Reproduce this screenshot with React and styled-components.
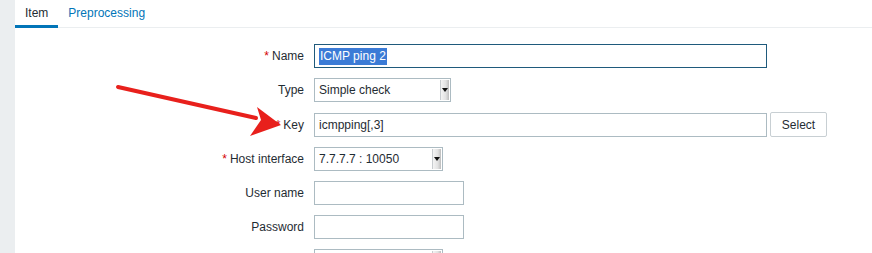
import React from 'react';
import styled, { createGlobalStyle } from 'styled-components';

const GlobalStyle = createGlobalStyle`
  html, body {
    margin: 0;
    padding: 0;
    background: #ffffff;
  }
  body {
    font-family: "Liberation Sans", Arial, sans-serif;
    font-size: 12px;
    color: #1f2c33;
  }
`;

const Page = styled.div`
  position: relative;
  display: flex;
  width: 872px;
  height: 253px;
  overflow: hidden;
`;

const Sidebar = styled.div`
  width: 15px;
  flex-shrink: 0;
  background: #ebeef0;
`;

const Main = styled.div`
  flex: 1;
  display: flex;
  flex-direction: column;
`;

const TabBar = styled.div`
  display: flex;
  height: 28px;
  border-bottom: 1px solid #ebeef0;
  box-sizing: border-box;
`;

const Tab = styled.div`
  padding: 0 10px;
  line-height: 26px;
  height: 28px;
  box-sizing: border-box;
  font-size: 12px;
  color: ${p => (p.active ? '#1f2c33' : '#0275b8')};
  border-bottom: 3px solid ${p => (p.active ? '#0275b8' : 'transparent')};
  margin-bottom: -1px;
`;

const Form = styled.div`
  display: grid;
  grid-template-columns: 289px auto;
  column-gap: 10px;
  row-gap: 10px;
  padding-top: 16px;
  align-items: center;
`;

const Label = styled.div`
  text-align: right;
  white-space: nowrap;
`;

const Asterisk = styled.span`
  color: #d40000;
  margin-right: 3px;
`;

const Field = styled.div`
  display: flex;
  align-items: center;
  gap: 3px;
`;

const TextBox = styled.div`
  width: ${p => p.width}px;
  height: 24px;
  box-sizing: border-box;
  border: 1px solid ${p => (p.focused ? '#1f5a7c' : '#acbbc2')};
  background: #ffffff;
  padding: 0 4px;
  display: flex;
  align-items: center;
`;

const Selected = styled.span`
  background: #3b7bd6;
  color: #ffffff;
  line-height: 17px;
  padding: 0 1px;
`;

const SelectBox = styled.div`
  width: ${p => p.width}px;
  height: 24px;
  box-sizing: border-box;
  border: 1px solid #acbbc2;
  background: #ffffff;
  padding-left: 4px;
  display: flex;
  align-items: center;
  justify-content: space-between;
`;

const DropButton = styled.div`
  width: 9px;
  height: 20px;
  margin-right: 1px;
  box-sizing: border-box;
  border-left: 1px solid #c8cccf;
  background: linear-gradient(90deg, #f4f4f4 0%, #e2e2e2 60%, #bdbdbd 100%);
  display: flex;
  align-items: center;
  justify-content: center;
  &::after {
    content: '';
    border-left: 3px solid transparent;
    border-right: 3px solid transparent;
    border-top: 4px solid #111111;
  }
`;

const Button = styled.div`
  width: 57px;
  height: 25px;
  box-sizing: border-box;
  border: 1px solid #c8cfd3;
  border-radius: 2px;
  background: #ffffff;
  display: flex;
  align-items: center;
  justify-content: center;
  color: #1f2c33;
`;

const Arrow = styled.svg`
  position: absolute;
  left: 0;
  top: 0;
  pointer-events: none;
`;

const rows = [
  { label: 'Name', required: true },
  { label: 'Type' },
  { label: 'Key', required: true },
  { label: 'Host interface', required: true },
  { label: 'User name' },
  { label: 'Password' },
  { label: '' },
];

const renderField = index => {
  switch (index) {
    case 0:
      return (
        <TextBox width={453} focused>
          <Selected>ICMP ping 2</Selected>
        </TextBox>
      );
    case 1:
      return (
        <SelectBox width={137}>
          Simple check
          <DropButton />
        </SelectBox>
      );
    case 2:
      return (
        <Field>
          <TextBox width={453}>icmpping[,3]</TextBox>
          <Button>Select</Button>
        </Field>
      );
    case 3:
      return (
        <SelectBox width={129}>
          7.7.7.7 : 10050
          <DropButton />
        </SelectBox>
      );
    case 4:
    case 5:
      return <TextBox width={150} />;
    default:
      return (
        <SelectBox width={129}>
          <span />
          <DropButton />
        </SelectBox>
      );
  }
};

export default function App() {
  return (
    <>
      <GlobalStyle />
      <Page>
        <Sidebar />
        <Main>
          <TabBar>
            <Tab active>Item</Tab>
            <Tab>Preprocessing</Tab>
          </TabBar>
          <Form>
            {rows.map((row, i) => (
              <React.Fragment key={i}>
                <Label>
                  {row.required && <Asterisk>*</Asterisk>}
                  {row.label}
                </Label>
                {renderField(i)}
              </React.Fragment>
            ))}
          </Form>
        </Main>
        <Arrow width="872" height="253" viewBox="0 0 872 253">
          <line x1="118" y1="87" x2="256" y2="118" stroke="#e8201c" strokeWidth="4" strokeLinecap="round" />
          <polygon points="281,125 257,107 261,120 250,136" fill="#e8201c" />
        </Arrow>
      </Page>
    </>
  );
}
